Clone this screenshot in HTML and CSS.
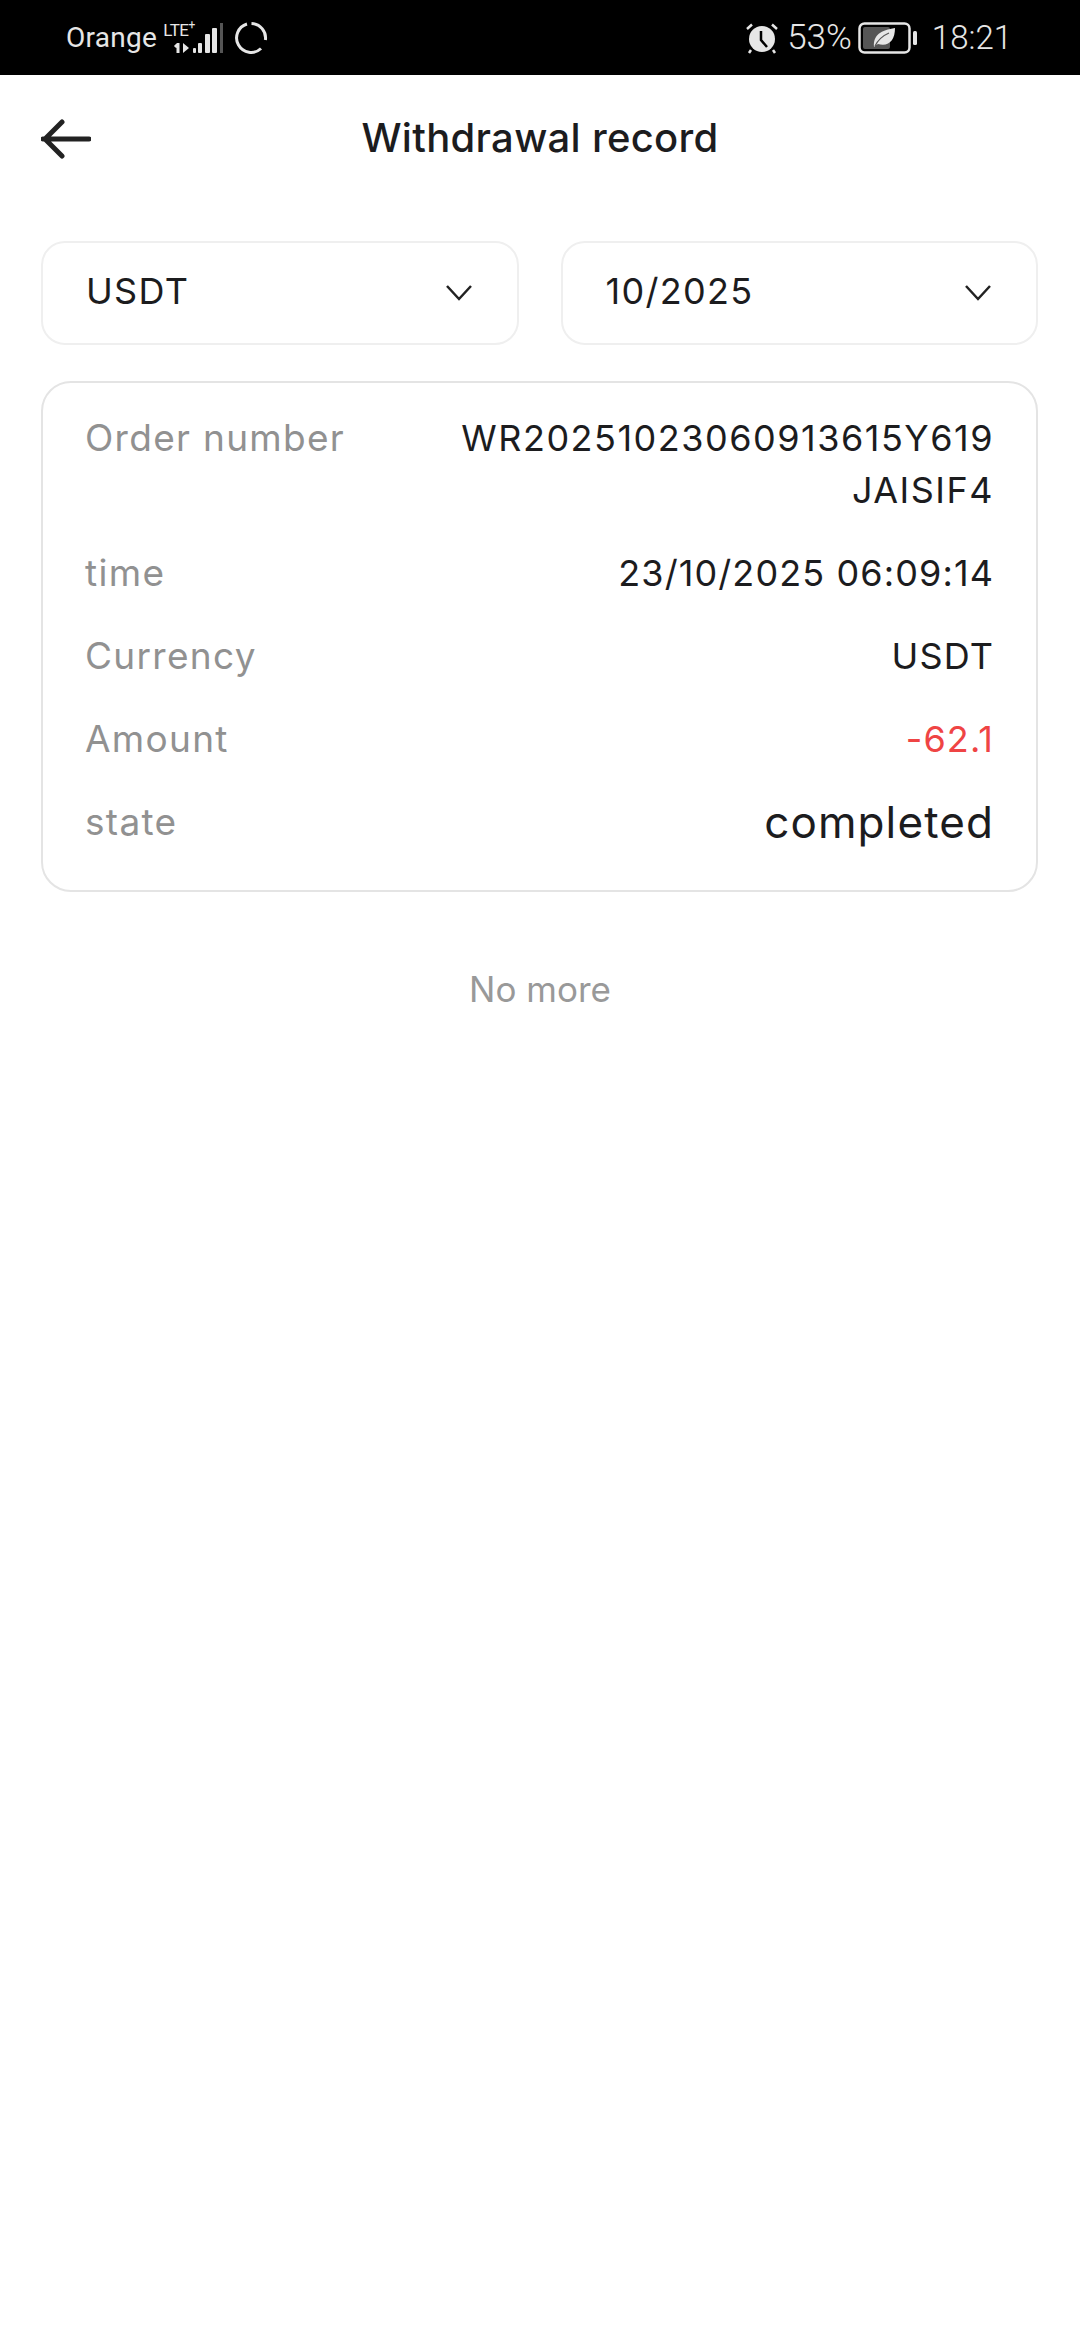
FILE: index.html
```html
<!DOCTYPE html>
<html lang="en">

<head>
    <meta charset="UTF-8">
    <meta name="viewport" content="width=device-width, initial-scale=1.0">
    <link rel="stylesheet" href="styles.css">
    <title>Withdrawal record</title>
</head>

<body>
    <div class="status-bar">
        <div class="status-left">
            <span class="carrier">Orange</span>
            <div class="signal">
                <span class="lte">LTE<sup>+</sup></span>
                <svg class="signal-bars" width="50" height="30" viewBox="0 0 50 30">
                    <path d="M5 20 V30 M5 21 L2 24" stroke="#e6e6e6" stroke-width="3" fill="none"/>
                    <path d="M10 20 L16 25 L10 30 Z" fill="#e6e6e6"/>
                    <rect x="20" y="25" width="3" height="5" rx="1" fill="#e6e6e6"/>
                    <rect x="25" y="20" width="4" height="10" rx="1" fill="#e6e6e6"/>
                    <rect x="32" y="11" width="5" height="19" rx="1" fill="#e6e6e6"/>
                    <rect x="39" y="5" width="5" height="25" rx="1" fill="#e6e6e6"/>
                    <rect x="47" y="0" width="3" height="30" fill="#555"/>
                </svg>
            </div>
            <svg class="sync" width="34" height="34" viewBox="0 0 34 34">
                <path d="M17.500 2.500 A14.500 14.500 0 0 1 31.400 19" stroke="#e6e6e6" stroke-width="3" fill="none"/>
                <path d="M27 27.500 A14.500 14.500 0 1 1 13 3" stroke="#e6e6e6" stroke-width="3" fill="none"/>
            </svg>
        </div>
        <div class="status-right">
            <svg class="alarm" width="34" height="32" viewBox="0 0 34 32">
                <circle cx="17" cy="17" r="13" fill="#e6e6e6"/>
                <path d="M16 9 V18 L22 25" stroke="#000" stroke-width="2.500" fill="none"/>
                <path d="M2 7 L7 2.500 M32 7 L27 2.500 M6 28 L4 31 M28 28 L30 31" stroke="#e6e6e6" stroke-width="2.500" fill="none"/>
            </svg>
            <span class="percent">53%</span>
            <svg class="battery" width="60" height="32" viewBox="0 0 60 32">
                <rect x="1.500" y="1.500" width="50" height="29" rx="5" stroke="#e6e6e6" stroke-width="2.500" fill="none"/>
                <rect x="5" y="5" width="27" height="22" rx="2" fill="#555"/>
                <path d="M16 25 C15 13 23 8 37 6 C37 18 31 25 20 22 C18 23 17 24 16 25 Z" fill="#e6e6e6"/>
                <path d="M17 24 C20 18 24 14 31 11" stroke="#555" stroke-width="1.200" fill="none"/>
                <rect x="55" y="9" width="4" height="14" rx="1.500" fill="#e6e6e6"/>
            </svg>
            <span class="clock">18:21</span>
        </div>
    </div>

    <div class="header">
        <svg class="back-icon" width="50" height="40" viewBox="0 0 50 40">
            <path d="M2 20 H48 M21 3 L4 20 L21 37" stroke="#222" stroke-width="5" stroke-linecap="round" stroke-linejoin="round" fill="none"/>
        </svg>
        <h1>Withdrawal record</h1>
    </div>

    <div class="filters">
        <div class="filter">
            <span>USDT</span>
            <svg width="28" height="18" viewBox="0 0 28 18"><path d="M2 2 L14 15 L26 2" stroke="#222" stroke-width="2.500" fill="none"/></svg>
        </div>
        <div class="filter">
            <span>10/2025</span>
            <svg width="28" height="18" viewBox="0 0 28 18"><path d="M2 2 L14 15 L26 2" stroke="#222" stroke-width="2.500" fill="none"/></svg>
        </div>
    </div>

    <div class="record-card">
        <div class="row">
            <span class="label">Order number</span>
            <span class="value order-no">WR20251023060913615Y619JAISIF4</span>
        </div>
        <div class="row">
            <span class="label">time</span>
            <span class="value">23/10/2025 06:09:14</span>
        </div>
        <div class="row">
            <span class="label">Currency</span>
            <span class="value">USDT</span>
        </div>
        <div class="row">
            <span class="label">Amount</span>
            <span class="value negative">-62.1</span>
        </div>
        <div class="row">
            <span class="label">state</span>
            <span class="value state">completed</span>
        </div>
    </div>

    <p class="no-more">No more</p>
</body>

</html>
```

FILE: styles.css
```css
* {
    margin: 0;
    padding: 0;
    box-sizing: border-box;
}

body {
    width: 1080px;
    height: 2340px;
    background: #fff;
    font-family: 'Inter', 'Noto Sans', sans-serif;
    color: #1c1c1e;
}

.status-bar {
    height: 75px;
    background: #000;
    color: #e6e6e6;
    display: flex;
    align-items: center;
    justify-content: space-between;
    padding: 0 68px 0 66px;
}

.status-left,
.status-right {
    display: flex;
    align-items: center;
}

.carrier {
    font-family: 'Roboto', sans-serif;
    font-size: 28px;
    letter-spacing: 0.3px;
    margin-right: 6px;
}

.signal {
    position: relative;
    width: 60px;
    height: 30px;
}

.lte {
    position: absolute;
    left: 0;
    top: -2px;
    font-family: 'Roboto', sans-serif;
    font-size: 17px;
    line-height: 18px;
    letter-spacing: -0.5px;
}

.lte sup {
    font-size: 12px;
    line-height: 0;
}

.signal-bars {
    position: absolute;
    left: 10px;
    bottom: 0;
}

.sync {
    margin-left: 11px;
}

.status-right .percent {
    font-family: 'Roboto', sans-serif;
    font-size: 35px;
    font-weight: 300;
    margin: 0 6px 0 8px;
}

.clock {
    font-family: 'Roboto', sans-serif;
    font-size: 33px;
    font-weight: 300;
    margin-left: 14px;
}

.header {
    position: relative;
    height: 166px;
    display: flex;
    align-items: center;
    justify-content: center;
    padding-bottom: 42px;
}

.header h1 {
    font-size: 40px;
    font-weight: 450;
    letter-spacing: 0.3px;
}

.back-icon {
    position: absolute;
    left: 41px;
    top: 44px;
}

.filters {
    display: flex;
    gap: 42px;
    padding: 0 42px 0 41px;
}

.filter {
    flex: 1;
    height: 104px;
    border: 2px solid #efefef;
    border-radius: 24px;
    display: flex;
    align-items: center;
    justify-content: space-between;
    padding: 0 44px 0 43px;
    font-size: 36px;
    letter-spacing: 1.3px;
}

.filter span {
    margin-top: -4px;
}

.record-card {
    margin: 36px 42px 0 41px;
    height: 511px;
    border: 2px solid #e4e4e4;
    border-radius: 30px;
    padding: 29px 42px 0 42px;
    display: flex;
    flex-direction: column;
    gap: 31px;
}

.row {
    display: flex;
    justify-content: space-between;
    font-size: 36px;
    line-height: 52px;
    letter-spacing: 1.1px;
}

.label {
    color: #919191;
    white-space: nowrap;
    font-size: 37px;
    letter-spacing: 1.3px;
}

.value {
    text-align: right;
}

.order-no {
    width: 545px;
    word-break: break-all;
    letter-spacing: 1.5px;
}

.negative {
    color: #ef4444;
}

.state {
    font-size: 44px;
}

.no-more {
    margin-top: 69px;
    text-align: center;
    font-size: 35px;
    line-height: 56px;
    color: #999;
}
```
